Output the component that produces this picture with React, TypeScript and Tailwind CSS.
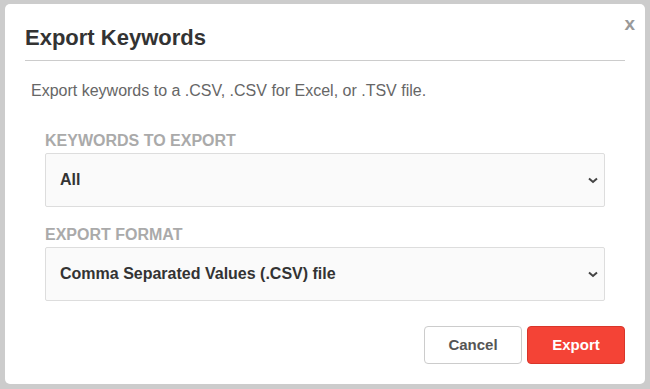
const font = { fontFamily: '"Liberation Sans", Arial, sans-serif' };

function Chevron() {
  return (
    <svg className="w-[10px] h-[10px] text-[#444]" viewBox="0 0 10 10" fill="none" stroke="currentColor" strokeWidth="2">
      <path d="M1 3.5L5 7l4-3.5" />
    </svg>
  );
}

function SelectField({ label, value }: { label: string; value: string }) {
  return (
    <div>
      <div className="text-[16px] leading-[20px] font-bold uppercase text-[#aaaaaa]">{label}</div>
      <div className="mt-[2px] relative h-[54px] border border-[#dddddd] rounded-[2px] bg-[#fafafa] flex items-center pl-[14px] pr-[6px]">
        <span className="flex-1 text-[16px] font-bold text-[#333333]">{value}</span>
        <Chevron />
      </div>
    </div>
  );
}

export default function App() {
  return (
    <div className="w-[650px] h-[389px] bg-[#cccccc] pt-[4px] pl-[5px] pr-[5px] pb-[5px]" style={font}>
      <div className="relative h-full bg-white rounded-[5px]">
        {/* Close */}
        <button className="absolute right-[10px] top-[10px] text-[19px] leading-[20px] font-bold text-[#999999]">x</button>

        {/* Header */}
        <div className="mx-[20px] pt-[22px] pb-[10px] border-b border-[#cccccc]">
          <h2 className="text-[22px] leading-[24px] font-bold text-[#333333]">Export Keywords</h2>
        </div>

        <p className="mt-[20px] pl-[26px] text-[16px] leading-[20px] text-[#666666]">
          Export keywords to a .CSV, .CSV for Excel, or .TSV file.
        </p>

        {/* Form */}
        <div className="mx-[40px] mt-[30px] flex flex-col gap-[18px]">
          <SelectField label="Keywords to export" value="All" />
          <SelectField label="Export format" value="Comma Separated Values (.CSV) file" />
        </div>

        {/* Actions */}
        <div className="mt-[25px] mr-[20px] flex justify-end gap-[5px]">
          <button className="w-[98px] h-[38px] rounded-[4px] border border-[#cccccc] bg-white text-[15px] font-bold text-[#555555]">
            Cancel
          </button>
          <button className="w-[98px] h-[38px] rounded-[4px] border border-[#d9352a] bg-[#f44336] text-[15px] font-bold text-white">
            Export
          </button>
        </div>
      </div>
    </div>
  );
}
